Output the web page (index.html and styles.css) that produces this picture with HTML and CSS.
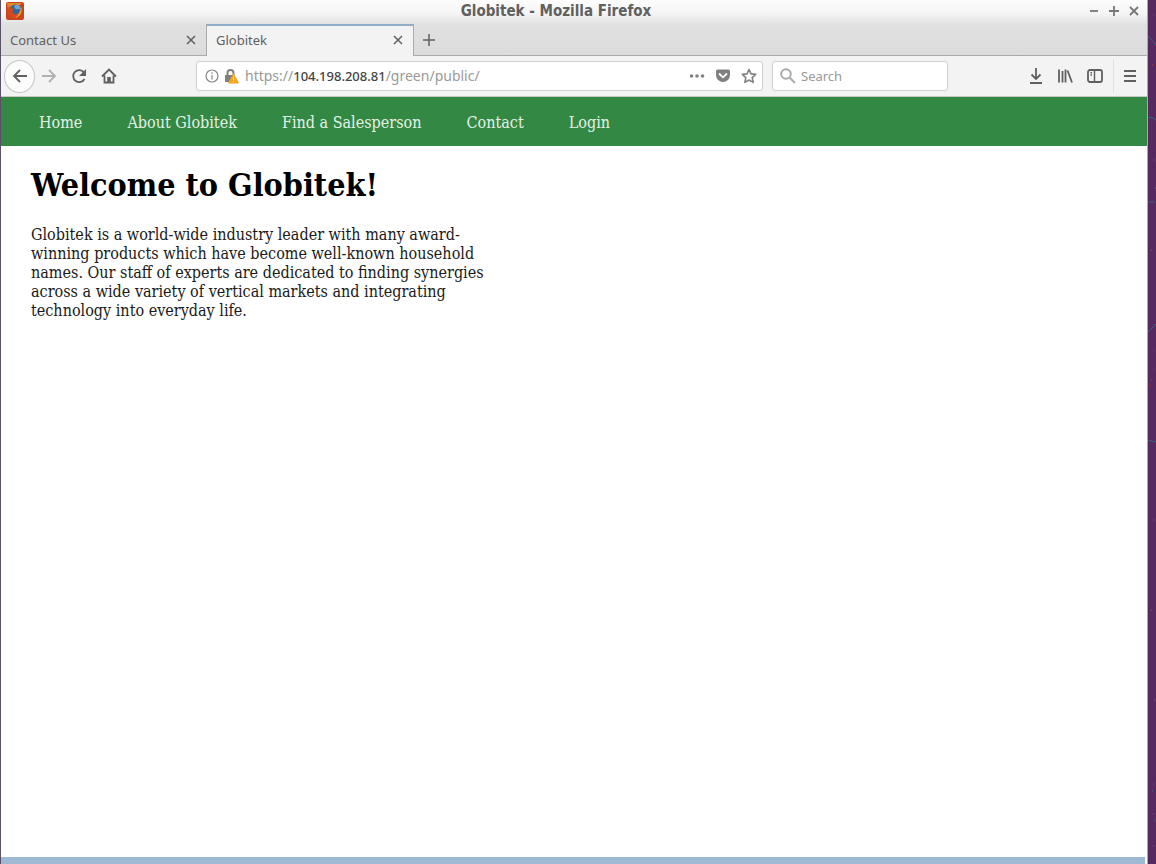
FILE: index.html
```html
<!DOCTYPE html>
<html lang="en">
<head>
<meta charset="utf-8">
<title>Globitek - Mozilla Firefox</title>
<link rel="stylesheet" href="styles.css">
</head>
<body>
<div class="window">
  <div class="chrome">
    <div class="titlebar">
      <svg class="app-icon" width="18" height="18" viewBox="0 0 18 18" aria-hidden="true">
        <rect width="18" height="18" rx="2" fill="#c9441d"/>
        <path d="M1 1h15l-2 2-8 1-4 4z" fill="#e58a2b"/>
        <circle cx="9.500" cy="8.500" r="6" fill="#35679f"/>
        <path d="M9 3c3-1 6 1 6 5-2-2-3 0-5-1S8 5 9 3z" fill="#69a9d2"/>
        <path d="M3 3c0 3 3 3 5 4-2 1-2 4 0 5s5 0 7-4c1 5-3 8-7 8S1 12 2 8z" fill="#d64a1d"/>
        <path d="M15 5c2 5-1 10-6 11 4-3 5-6 6-11z" fill="#f0a331"/>
      </svg>
      <div class="window-title">Globitek - Mozilla Firefox</div>
      <div class="window-buttons">
        <button type="button" aria-label="Minimize"><svg width="12" height="12" viewBox="0 0 12 12"><path d="M2 6h8"/></svg></button>
        <button type="button" aria-label="Maximize"><svg width="12" height="12" viewBox="0 0 12 12"><path d="M1 6h10M6 1v10"/></svg></button>
        <button type="button" aria-label="Close"><svg width="12" height="12" viewBox="0 0 12 12"><path d="M2 2l8 8M10 2l-8 8"/></svg></button>
      </div>
    </div>
    <div class="tabs">
      <div class="tab">
        <button type="button" class="tab-label">Contact Us</button>
        <button type="button" class="tab-close" aria-label="Close tab"><svg width="12" height="12" viewBox="0 0 12 12"><path d="M2 2l8 8M10 2l-8 8"/></svg></button>
      </div>
      <div class="tab tab-active">
        <button type="button" class="tab-label">Globitek</button>
        <button type="button" class="tab-close" aria-label="Close tab"><svg width="12" height="12" viewBox="0 0 12 12"><path d="M2 2l8 8M10 2l-8 8"/></svg></button>
      </div>
      <div class="tab-rest">
        <button type="button" class="new-tab" aria-label="New tab"><svg width="14" height="14" viewBox="0 0 14 14"><path d="M7 1v12M1 7h12"/></svg></button>
      </div>
    </div>
  </div>

  <div class="toolbar">
    <div class="nav-buttons">
      <button type="button" class="back" aria-label="Back"><svg width="16" height="16" viewBox="0 0 16 16"><path d="M15 8H2M8 2L2 8l6 6"/></svg></button>
      <button type="button" class="tool faded" aria-label="Forward"><svg width="16" height="16" viewBox="0 0 16 16"><path d="M1 8h13M8 2l6 6-6 6"/></svg></button>
      <button type="button" class="tool" aria-label="Reload"><svg width="16" height="16" viewBox="0 0 16 16"><path d="M13 4.500A6 6 0 1 0 13.500 11"/><path d="M15 1v7H8z" fill="#606060" stroke="none"/></svg></button>
      <button type="button" class="tool" aria-label="Home"><svg width="16" height="16" viewBox="0 0 16 16"><path d="M1 8.500L8 1.500l7 7M3.500 7.500V14.500h9V7.500"/><path d="M6.200 14.500V9h3.600v5.500z" fill="#606060" stroke="none"/></svg></button>
    </div>
    <div class="address">
      <svg width="14" height="14" viewBox="0 0 14 14" class="info"><circle cx="7" cy="7" r="6"/><path d="M7 6v4.500M7 3.200v1.600"/></svg>
      <svg width="16" height="16" viewBox="0 0 16 16" class="lock"><path d="M3.500 8V5a3 3 0 0 1 6 0v2" fill="none" stroke="#808080" stroke-width="2"/><path d="M1 7h9v7H1z" fill="#808080"/><path d="M9.500 6L14.500 15h-10z" fill="#f5a623" stroke="#f5a623" stroke-linejoin="round"/><path d="M9.500 9v3M9.500 13v1" stroke="#fde3b0" stroke-width="1"/></svg>
      <div class="url" role="textbox" aria-label="Address" tabindex="0">https://<span class="host">104.198.208.81</span>/green/public/</div>
      <button type="button" class="tool small" aria-label="Page actions"><svg width="16" height="16" viewBox="0 0 16 16"><g fill="#808080" stroke="none"><circle cx="2.500" cy="8" r="1.800"/><circle cx="8" cy="8" r="1.800"/><circle cx="13.500" cy="8" r="1.800"/></g></svg></button>
      <button type="button" class="tool small" aria-label="Save to Pocket"><svg width="16" height="16" viewBox="0 0 16 16"><path d="M2.500 1.500h11q1.500 0 1.500 1.500v4a7 7 0 0 1-14 0V3q0-1.500 1.500-1.500z" fill="#808080" stroke="none"/><path d="M4.500 6L8 9.300 11.500 6" stroke="#fff" stroke-width="1.800" stroke-linecap="round"/></svg></button>
      <button type="button" class="tool small" aria-label="Bookmark"><svg width="16" height="16" viewBox="0 0 16 16"><path d="M8 1.500l2 4.400 4.700.5-3.500 3.200 1 4.800L8 12l-4.200 2.400 1-4.800L1.300 6.400 6 5.900z" stroke="#808080" stroke-width="1.600" stroke-linejoin="round"/></svg></button>
    </div>
    <label class="search">
      <svg width="16" height="16" viewBox="0 0 16 16"><circle cx="6" cy="6" r="4.800"/><path d="M9.500 9.500l5.500 5.500"/></svg>
      <input type="text" placeholder="Search" aria-label="Search">
    </label>
    <div class="end-buttons">
      <button type="button" class="tool" aria-label="Downloads"><svg width="14" height="16" viewBox="0 0 14 16"><path d="M7 0v11M2.500 6.500L7 11l4.500-4.500M1 15h12"/></svg></button>
      <button type="button" class="tool" aria-label="Library"><svg width="16" height="16" viewBox="0 0 16 16"><path d="M2 1.500v13M5.500 3v11.500M8.500 1.500v13M10.500 2.500l4.500 12"/></svg></button>
      <button type="button" class="tool" aria-label="Sidebars"><svg width="16" height="16" viewBox="0 0 16 16"><rect x="1" y="2" width="14" height="12" rx="2"/><path d="M7.500 2v12M3.500 4.800H5M3.500 7H5" stroke-width="1.400"/></svg></button>
      <span class="divider"></span>
      <button type="button" class="tool" aria-label="Menu"><svg width="12" height="16" viewBox="0 0 12 16"><path d="M0 3h12M0 8h12M0 13h12"/></svg></button>
    </div>
  </div>

  <nav class="site-nav">
    <a href="#">Home</a>
    <a href="#">About Globitek</a>
    <a href="#">Find a Salesperson</a>
    <a href="#">Contact</a>
    <a href="#">Login</a>
  </nav>
  <main class="content">
    <h1>Welcome to Globitek!</h1>
    <p>Globitek is a world-wide industry leader with many award-winning products which have become well-known household names. Our staff of experts are dedicated to finding synergies across a wide variety of vertical markets and integrating technology into everyday life.</p>
  </main>
  <div class="bottom-edge"></div>
</div>
<svg class="desktop" width="8" height="864" viewBox="0 0 8 864" aria-hidden="true">
  <path d="M0 36l8 9M0 117l5 1 3 2M0 202h7M0 332l8-8M0 440l8 2" fill="none" stroke="#356580"/>
  <path d="M5 15h1M4 65h1M5 370h1M2 386h1M5 416h1M5 350h1M3 380h1" stroke="#b83a26"/>
  <path d="M5 784h1M5 814h1M6 821h1M5 846h1M4 791h1" stroke="#2678a0"/>
  <path d="M6 160h1M7 188h1M3 250h1M5 520h1M3 610h1M6 700h1" stroke="#78628f"/>
</svg>
</body>
</html>
```
FILE: styles.css
```css
* { box-sizing: border-box; }

body {
  margin: 0;
  min-height: 100vh;
  display: flex;
  background: #562961;
  font-family: "Noto Sans", "Open Sans", sans-serif;
  font-size: 13px;
  color: #606060;
}

button {
  margin: 0;
  padding: 0;
  border: 0;
  background: none;
  font: inherit;
  color: inherit;
  display: flex;
  align-items: center;
  justify-content: center;
}

svg { display: block; flex: none; }
button svg { fill: none; stroke: #606060; stroke-width: 1.8; }

.window {
  flex: 1;
  min-width: 0;
  display: flex;
  flex-direction: column;
  background: #fff;
  border-left: 1px solid #5c4f68;
  border-right: 1px solid #aaa8ac;
}

.desktop { overflow: hidden; }

.chrome { background: linear-gradient(#fdfdfd 0, #f4f4f4 14px, #e0e0e0 25px, #dcdcdc 56px); }

.titlebar {
  display: flex;
  align-items: center;
  height: 24px;
  padding: 0 7px 3px 5px;
}

.window-title {
  flex: 1;
  text-align: center;
  font: bold 15px/20px "DejaVu Sans Condensed", "DejaVu Sans", sans-serif;
}

.window-buttons { display: flex; gap: 8px; }
.window-buttons svg { stroke: #777; }

.tabs { display: flex; height: 32px; }

.tab {
  width: 205px;
  display: flex;
  align-items: center;
  padding: 0 9px;
  border-bottom: 1px solid #aaa;
}

.tab-active {
  width: 208px;
  background: #f3f3f3;
  border: 1px solid #aaa;
  border-top: 2px solid #92adc6;
  border-bottom: 0;
  padding-bottom: 2px;
}

.tab-label { flex: 1; justify-content: flex-start; }
.tab-close svg { stroke-width: 1.5; }

.tab-rest {
  flex: 1;
  display: flex;
  padding-left: 8px;
  border-bottom: 1px solid #aaa;
}

.new-tab svg { stroke-width: 1.5; }

.toolbar {
  display: flex;
  align-items: center;
  height: 41px;
  padding: 0 11px 0 3px;
  background: #f3f3f3;
  border-bottom: 1px solid #c8c8c8;
}

.nav-buttons {
  display: flex;
  align-items: center;
  gap: 14px;
  width: 192px;
}

.nav-buttons .back {
  width: 31px;
  height: 33px;
  margin-right: -8px;
  border: 1px solid #c6c6c6;
  border-radius: 50%;
  background: #fcfcfc;
}

.faded { opacity: 0.45; }

.address, .search {
  display: flex;
  align-items: center;
  height: 30px;
  background: #fff;
  border: 1px solid #cfcfcf;
  border-radius: 3px;
}

.address {
  flex: 1;
  gap: 5px;
  padding: 0 5px 0 8px;
  margin-right: 9px;
}

.info { fill: none; stroke: #888; stroke-width: 1.2; }

.url {
  flex: 1;
  font-size: 14px;
  line-height: 20px;
  color: #999;
  white-space: nowrap;
}

.host { font-size: 13px; font-weight: 500; color: #444; }
.small { margin-left: 5px; }

.search { width: 176px; gap: 5px; padding: 0 7px; }
.search svg { fill: none; stroke: #aaa; stroke-width: 2; }

.search input {
  flex: 1;
  min-width: 0;
  border: 0;
  padding: 0;
  outline: 0;
  background: none;
  font: inherit;
  color: #555;
}

.search input::placeholder { color: #999; opacity: 1; }

.end-buttons {
  display: flex;
  align-items: center;
  gap: 14px;
  margin-left: 81px;
}

.divider {
  width: 1px;
  height: 34px;
  margin: 0 -4px;
  background: #e0e0e0;
}

.site-nav {
  display: flex;
  gap: 45px;
  padding: 16px 38px 14px;
  background: #338844;
  font: 16px/19px "DejaVu Serif Condensed", "DejaVu Serif", serif;
}

.site-nav a { color: #e4f1e6; text-decoration: none; }

.content {
  flex: 1;
  padding: 20px 30px;
  font: 16px/19px "DejaVu Serif Condensed", "DejaVu Serif", serif;
  color: #1a1a1a;
}

.content h1 {
  margin: 0 0 21px;
  font-size: 32px;
  line-height: 38px;
  color: #000;
}

.content p { max-width: 460px; margin: 0; }

.bottom-edge {
  height: 7px;
  margin-right: 2px;
  background: #9dbad2;
}
```
